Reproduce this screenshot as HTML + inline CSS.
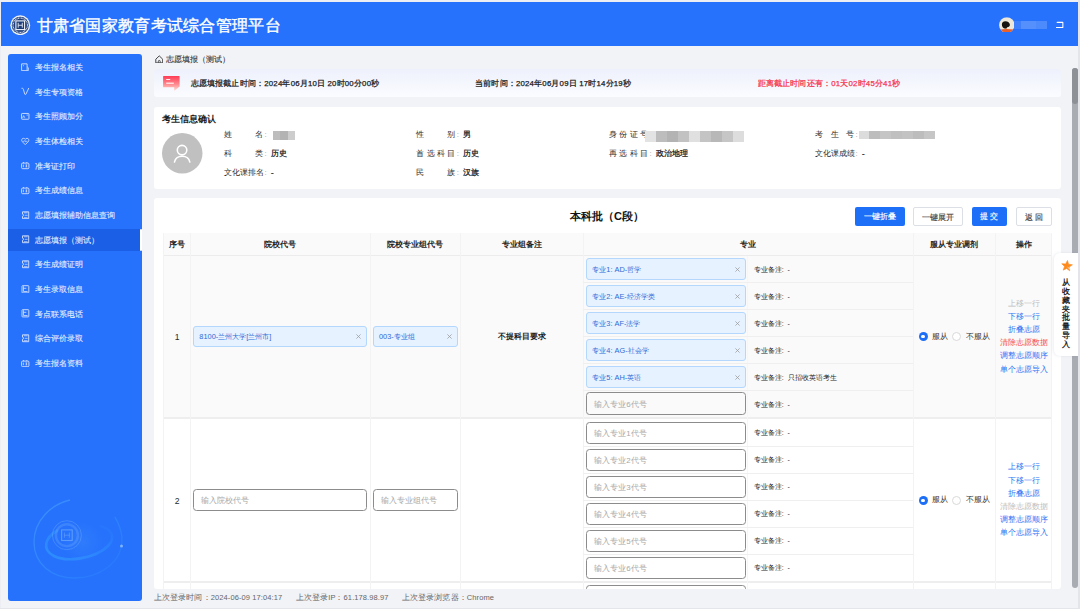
<!DOCTYPE html>
<html><head><meta charset="utf-8">
<style>
*{box-sizing:border-box;margin:0;padding:0}
html,body{width:1080px;height:609px;overflow:hidden}
body{position:relative;background:#e9eaee;font-family:"Liberation Sans",sans-serif;color:#333;font-size:8px;line-height:1}
.abs{position:absolute}
#page{position:absolute;left:0;top:0;width:1080px;height:609px;background:#f2f3f7;overflow:hidden}
#hdr{position:absolute;left:1px;top:2px;width:1077px;height:44px;background:#2672fc}
#title{position:absolute;left:35.5px;top:15px;color:#fff;font-size:16.3px;white-space:nowrap;letter-spacing:0.3px;-webkit-text-stroke:0.4px #fff}
#side{position:absolute;left:8px;top:54px;width:134.4px;height:546.8px;background:#2672fc;border-radius:3px;overflow:hidden}
.mi{position:absolute;left:0;width:134.7px;height:22px;color:#e6eeff;font-size:7.55px;-webkit-text-stroke:0.1px #e6eeff}
.mi .ic{position:absolute;left:13px;top:6.75px;width:8.5px;height:8.5px}
.mi .tx{position:absolute;left:27px;top:8px;white-space:nowrap}
.mi.act{background:#1b5fe6}
.mi.act:after{content:"";position:absolute;right:0.9px;top:0;width:2.1px;height:22px;background:#fff;border-radius:1px}
.card{position:absolute;background:#fff;border-radius:3px}
.t8{font-size:7.8px;white-space:nowrap;position:absolute}
.b{font-weight:bold}
.md{-webkit-text-stroke:0.25px #1a1a1a}
.cen{text-align:center}
.ft{font-size:7.5px;color:#666;letter-spacing:0.1px}
.rm{font-size:6.9px;color:#1f1f1f}
.btn{font-size:8px;text-align:center;line-height:20px;white-space:nowrap;-webkit-text-stroke:0.15px currentColor}
.tag{background:#e6f2ff;border:1px solid #b3d7fd;border-radius:3px;color:#2e6bd8;font-size:7.4px;white-space:nowrap}
.tag .x{position:absolute;color:#999;font-size:9px}
.inp{background:transparent;border:1px solid #8c8c8c;border-radius:3.5px;color:#a8a8a8;font-size:7.9px;white-space:nowrap}
</style></head><body>
<div id="page">
 <div id="hdr">
  <svg class="abs" style="left:9.1px;top:12.9px" width="20.5" height="20.5" viewBox="0 0 20.5 20.5">
   <circle cx="10.25" cy="10.25" r="9.9" fill="#eef2f8"/>
   <circle cx="10.25" cy="10.25" r="8.5" fill="#1d3c78"/>
   <circle cx="10.25" cy="10.25" r="7.2" fill="none" stroke="#dfe6f2" stroke-width="1.2" stroke-dasharray="0.9 0.6"/>
   <circle cx="10.25" cy="10.25" r="6" fill="#1d3c78"/>
   <rect x="5.9" y="5.9" width="8.7" height="8.7" fill="none" stroke="#f2f5fa" stroke-width="1.1"/>
   <path d="M8.2 7.8V12.7M12.3 7.8V12.7M8.2 10.25H12.3" stroke="#e8eef8" stroke-width="0.9" fill="none"/>
  </svg>
  <div id="title">甘肃省国家教育考试综合管理平台</div>
  <svg class="abs" style="left:997.6px;top:14.5px" width="15.6" height="15.9" viewBox="0 0 16 16">
   <defs><clipPath id="av"><circle cx="8" cy="8" r="7.95"/></clipPath></defs>
   <g clip-path="url(#av)"><rect width="16" height="16" fill="#eee8da"/>
   <rect x="6.6" y="10" width="1.2" height="2.6" fill="#d9a06a"/>
   <path d="M3 8.3C2.6 5.9 4.2 4.3 6.6 4.3C9 4.3 11.2 5.9 11.2 7.9C11.2 9.4 10 10.2 8.5 10.4L7.4 11.6L5.6 11.6C4.1 10.9 3.2 9.8 3 8.3Z" fill="#161412"/>
   <path d="M0 12.9Q8 11.2 16 12.9V16H0Z" fill="#e8612c"/></g>
  </svg>
  <div class="abs" style="left:1013.4px;top:18.8px;width:7px;height:8.3px;background:#3f7ffc"></div>
  <div class="abs" style="left:1020.4px;top:18.8px;width:15px;height:8.3px;background:#5590fd"></div>
  <div class="abs" style="left:1035.4px;top:18.8px;width:10.3px;height:8.3px;background:#4d8bfd"></div>
  <svg class="abs" style="left:1055px;top:19px" width="9" height="8" viewBox="0 0 9 8">
   <path d="M1.1 1.35H6.85V6.4H0.3" fill="none" stroke="#fff" stroke-width="1.05" stroke-linecap="round" stroke-linejoin="round"/>
  </svg>
 </div>

 <div id="side">
  <svg class="abs" style="left:0;top:0" width="134" height="546" viewBox="0 0 134 546">
   <defs>
    <linearGradient id="g1" x1="0" y1="0" x2="1" y2="1"><stop offset="0" stop-color="#5ab4ff" stop-opacity="0.45"/><stop offset="0.6" stop-color="#3aa2ff" stop-opacity="0.35"/><stop offset="1" stop-color="#3aa2ff" stop-opacity="0.05"/></linearGradient>
    <linearGradient id="g2" x1="0" y1="1" x2="1" y2="0"><stop offset="0" stop-color="#35a6ff" stop-opacity="0.55"/><stop offset="0.7" stop-color="#35a6ff" stop-opacity="0.25"/><stop offset="1" stop-color="#35a6ff" stop-opacity="0"/></linearGradient>
    <radialGradient id="g3" cx="0.5" cy="0.5" r="0.5"><stop offset="0" stop-color="#5aa6ff" stop-opacity="0.18"/><stop offset="1" stop-color="#5aa6ff" stop-opacity="0"/></radialGradient>
   </defs>
   <g fill="none">
    <path d="M62 446C44 450 26 466 26 488C26 510 44 524 66 524C92 524 114 508 114 486C114 478 111 470 107 463" stroke="url(#g1)" stroke-width="1.3"/>
    <path d="M50 476C36 484 34 496 46 502C60 509 88 504 100 492C108 484 104 474 92 472" stroke="url(#g2)" stroke-width="2.6"/>
    <circle cx="75" cy="488" r="20" fill="url(#g3)"/>
    <circle cx="58.9" cy="481.2" r="14.5" stroke="#8cc4ff" stroke-opacity="0.35" stroke-width="0.8"/>
    <circle cx="58.9" cy="481.2" r="11" stroke="#8cc4ff" stroke-opacity="0.22" stroke-width="2.4"/>
    <rect x="53.6" y="475.9" width="10.6" height="10.6" stroke="#9ccbff" stroke-opacity="0.45" stroke-width="1.1"/>
    <path d="M56.4 478.6V483.8M61.4 478.6V483.8M56.4 481.2H61.4" stroke="#9ccbff" stroke-opacity="0.4" stroke-width="0.8"/>
   </g>
   <circle cx="113.5" cy="492" r="1.5" fill="#a7d4ff" fill-opacity="0.65"/>
  </svg>
  <div class="mi" style="top:2.00px"><svg class="ic" viewBox="0 0 8.5 8.5"><path d="M0.6 0.85H6.1V7.65H0.6Z" fill="none" stroke="#dfe8ff" stroke-width="0.85"/><path d="M6.1 3.7L7.3 4.7V7.65H6.1" fill="none" stroke="#dfe8ff" stroke-width="0.8"/><path d="M1.9 2.1L3 3.2" stroke="#dfe8ff" stroke-width="0.7"/></svg><span class="tx">考生报名相关</span></div>
  <div class="mi" style="top:26.67px"><svg class="ic" viewBox="0 0 8.5 8.5"><path d="M0.5 1.3C1.5 0.9 2.1 1.5 2.4 2.3L3.7 7C3.9 7.7 4.7 7.7 5 7L7.8 1" fill="none" stroke="#dfe8ff" stroke-width="0.85"/></svg><span class="tx">考生专项资格</span></div>
  <div class="mi" style="top:51.34px"><svg class="ic" viewBox="0 0 8.5 8.5"><rect x="0.55" y="1.45" width="7.4" height="5.8" rx="0.6" fill="none" stroke="#dfe8ff" stroke-width="0.85"/><path d="M1.6 6.2L2.6 3.6L3.8 5.8" fill="none" stroke="#dfe8ff" stroke-width="0.7"/><circle cx="6.2" cy="3" r="0.6" fill="#dfe8ff"/></svg><span class="tx">考生照顾加分</span></div>
  <div class="mi" style="top:76.01px"><svg class="ic" viewBox="0 0 8.5 8.5"><path d="M4.25 7.6L1.2 4.7C0.2 3.5 0.7 1.3 2.4 1.3C3.2 1.3 3.7 1.7 4.25 2.3C4.8 1.7 5.3 1.3 6.1 1.3C7.8 1.3 8.3 3.5 7.3 4.7Z" fill="none" stroke="#dfe8ff" stroke-width="0.8"/><path d="M2 4.3H3.3L3.9 3.4L4.6 5.1L5.2 4.3H6.5" fill="none" stroke="#dfe8ff" stroke-width="0.6"/></svg><span class="tx">考生体检相关</span></div>
  <div class="mi" style="top:100.68px"><svg class="ic" viewBox="0 0 8.5 8.5"><rect x="0.6" y="2.1" width="7.3" height="5.6" rx="1" fill="none" stroke="#dfe8ff" stroke-width="0.85"/><path d="M2.5 2.1V1M5.8 2.1V1M2.4 3.6V6.2M4.6 3.9H6.3M4.6 5.9H6.3M5.4 3.9V5.9" fill="none" stroke="#dfe8ff" stroke-width="0.75"/></svg><span class="tx">准考证打印</span></div>
  <div class="mi" style="top:125.35px"><svg class="ic" viewBox="0 0 8.5 8.5"><rect x="0.6" y="2.1" width="7.3" height="5.6" rx="1" fill="none" stroke="#dfe8ff" stroke-width="0.85"/><path d="M2.5 2.1V1M5.8 2.1V1M2.4 3.6V6.2M4.6 3.9H6.3M4.6 5.9H6.3M5.4 3.9V5.9" fill="none" stroke="#dfe8ff" stroke-width="0.75"/></svg><span class="tx">考生成绩信息</span></div>
  <div class="mi" style="top:150.02px"><svg class="ic" viewBox="0 0 8.5 8.5"><path d="M1.5 0.8H7.7V7.7H1.5V5.3A1 1 0 0 0 1.5 3.2Z" fill="none" stroke="#dfe8ff" stroke-width="0.85"/><path d="M2.8 1.8H6.6M3.8 4.3H6.6M2.8 6.7H6.6" fill="none" stroke="#dfe8ff" stroke-width="0.7"/></svg><span class="tx">志愿填报辅助信息查询</span></div>
  <div class="mi act" style="top:174.69px"><svg class="ic" viewBox="0 0 8.5 8.5"><path d="M1.5 0.8H7.7V7.7H1.5V5.3A1 1 0 0 0 1.5 3.2Z" fill="none" stroke="#dfe8ff" stroke-width="0.85"/><path d="M2.8 1.8H6.6M3.8 4.3H6.6M2.8 6.7H6.6" fill="none" stroke="#dfe8ff" stroke-width="0.7"/></svg><span class="tx">志愿填报（测试）</span></div>
  <div class="mi" style="top:199.36px"><svg class="ic" viewBox="0 0 8.5 8.5"><path d="M1.5 0.8H7.7V7.7H1.5V5.3A1 1 0 0 0 1.5 3.2Z" fill="none" stroke="#dfe8ff" stroke-width="0.85"/><path d="M2.8 1.8H6.6M3.8 4.3H6.6M2.8 6.7H6.6" fill="none" stroke="#dfe8ff" stroke-width="0.7"/></svg><span class="tx">考生成绩证明</span></div>
  <div class="mi" style="top:224.03px"><svg class="ic" viewBox="0 0 8.5 8.5"><rect x="1" y="0.7" width="6.8" height="7.2" rx="0.6" fill="none" stroke="#dfe8ff" stroke-width="0.85"/><path d="M2.5 1.2V6.5H6.6M2.5 3.3H5.3" fill="none" stroke="#dfe8ff" stroke-width="0.75"/></svg><span class="tx">考生录取信息</span></div>
  <div class="mi" style="top:248.70px"><svg class="ic" viewBox="0 0 8.5 8.5"><rect x="1" y="0.7" width="6.8" height="7.2" rx="0.6" fill="none" stroke="#dfe8ff" stroke-width="0.85"/><path d="M2.5 1.2V6.5H6.6M2.5 3.3H5.3" fill="none" stroke="#dfe8ff" stroke-width="0.75"/></svg><span class="tx">考点联系电话</span></div>
  <div class="mi" style="top:273.37px"><svg class="ic" viewBox="0 0 8.5 8.5"><path d="M1.5 0.8H7.7V7.7H1.5V5.3A1 1 0 0 0 1.5 3.2Z" fill="none" stroke="#dfe8ff" stroke-width="0.85"/><path d="M2.8 1.8H6.6M3.8 4.3H6.6M2.8 6.7H6.6" fill="none" stroke="#dfe8ff" stroke-width="0.7"/></svg><span class="tx">综合评价录取</span></div>
  <div class="mi" style="top:298.04px"><svg class="ic" viewBox="0 0 8.5 8.5"><rect x="0.6" y="2.1" width="7.3" height="5.6" rx="1" fill="none" stroke="#dfe8ff" stroke-width="0.85"/><path d="M2.5 2.1V1M5.8 2.1V1M2.4 3.6V6.2M4.6 3.9H6.3M4.6 5.9H6.3M5.4 3.9V5.9" fill="none" stroke="#dfe8ff" stroke-width="0.75"/></svg><span class="tx">考生报名资料</span></div>
 </div>

 <!-- breadcrumb -->
 <svg class="abs" style="left:154.6px;top:54.6px" width="8.5" height="8.5" viewBox="0 0 8.5 8.5"><path d="M0.8 4.2L4.25 0.9L7.7 4.2V7.9H0.8Z" fill="none" stroke="#3a3a3a" stroke-width="0.95" stroke-linejoin="round"/><path d="M3.3 7.9V5.9C3.3 5.3 5.2 5.3 5.2 5.9V7.9" fill="none" stroke="#3a3a3a" stroke-width="0.8"/></svg>
 <div class="t8" style="left:165.6px;top:55.8px;color:#333;font-size:7.6px;-webkit-text-stroke:0.12px #333">志愿填报（测试）</div>

 <!-- notice -->
 <div class="card" style="left:154px;top:68.5px;width:907px;height:28.6px;background:linear-gradient(#eef1fc,#fbfcff)"></div>
 <svg class="abs" style="left:161.5px;top:75px" width="18" height="17" viewBox="0 0 18 17">
  <defs><linearGradient id="ng" x1="0" y1="0" x2="0" y2="1"><stop offset="0" stop-color="#ff3b55"/><stop offset="0.55" stop-color="#ff8a8f"/><stop offset="1" stop-color="#ffe0d8"/></linearGradient></defs>
  <path d="M1.6 0.9H17.1Q17.6 0.9 17.6 1.4V11.6L12.2 16V12.3H1.6Q1.1 12.3 1.1 11.8V1.4Q1.1 0.9 1.6 0.9Z" fill="url(#ng)"/>
  <rect x="4.2" y="4" width="4" height="1" fill="#fff" fill-opacity="0.9"/><rect x="4.2" y="7.6" width="7.6" height="1.2" fill="#fff" fill-opacity="0.9"/>
 </svg>
 <div class="t8 md" style="left:190.5px;top:79.5px;color:#1a1a1a;letter-spacing:0.2px">志愿填报截止时间：2024年06月10日 20时00分00秒</div>
 <div class="t8 md" style="left:475px;top:79.5px;color:#1a1a1a;letter-spacing:0.2px">当前时间：2024年06月09日 17时14分19秒</div>
 <div class="t8 md" style="left:757.5px;top:79.5px;color:#f5354f;letter-spacing:0.2px;-webkit-text-stroke-color:#f5354f">距离截止时间还有：01天02时45分41秒</div>

 <!-- info card -->
 <div class="card" style="left:154px;top:107px;width:907px;height:82px"></div>
 <div class="t8 b" style="left:161.5px;top:115px;font-size:9px;color:#1a1a1a">考生信息确认</div>
 <svg class="abs" style="left:162.3px;top:133.3px" width="40.5" height="40.5" viewBox="0 0 40 40">
  <circle cx="20" cy="20" r="20" fill="#c0c0c0"/>
  <circle cx="19.8" cy="16.9" r="4.7" fill="none" stroke="#fff" stroke-width="1.55"/>
  <path d="M12.3 28.7C13 25 16 22.9 19.9 22.9C23.8 22.9 26.8 25 27.5 28.7" fill="none" stroke="#fff" stroke-width="1.55" stroke-linecap="round"/>
 </svg>
 <div class="t8" style="left:224.00px;top:131.3px;color:#2b2b2b">姓</div><div class="t8" style="left:255.20px;top:131.3px;color:#2b2b2b">名</div><div class="t8" style="left:264.50px;top:130.8px;color:#999">:</div>
 <div class="t8" style="left:224.00px;top:150.3px;color:#2b2b2b">科</div><div class="t8" style="left:255.20px;top:150.3px;color:#2b2b2b">类</div><div class="t8" style="left:264.50px;top:149.8px;color:#999">:</div>
 <div class="t8 md" style="left:271px;top:150.3px;color:#1a1a1a">历史</div>
 <div class="t8" style="left:224px;top:169.3px;color:#2b2b2b">文化课排名</div><div class="t8" style="left:264.50px;top:168.8px;color:#999">:</div>
 <div class="t8 md" style="left:271px;top:169.3px;color:#1a1a1a">-</div>
 <div class="t8" style="left:416.20px;top:131.3px;color:#2b2b2b">性</div><div class="t8" style="left:447.40px;top:131.3px;color:#2b2b2b">别</div><div class="t8" style="left:456.70px;top:130.8px;color:#999">:</div>
 <div class="t8 md" style="left:463.2px;top:131.3px;color:#1a1a1a">男</div>
 <div class="t8" style="left:416.20px;top:150.3px;color:#2b2b2b">首</div><div class="t8" style="left:426.60px;top:150.3px;color:#2b2b2b">选</div><div class="t8" style="left:437.00px;top:150.3px;color:#2b2b2b">科</div><div class="t8" style="left:447.40px;top:150.3px;color:#2b2b2b">目</div><div class="t8" style="left:456.70px;top:149.8px;color:#999">:</div>
 <div class="t8 md" style="left:463.2px;top:150.3px;color:#1a1a1a">历史</div>
 <div class="t8" style="left:416.20px;top:169.3px;color:#2b2b2b">民</div><div class="t8" style="left:447.40px;top:169.3px;color:#2b2b2b">族</div><div class="t8" style="left:456.70px;top:168.8px;color:#999">:</div>
 <div class="t8 md" style="left:463.2px;top:169.3px;color:#1a1a1a">汉族</div>
 <div class="t8" style="left:609.00px;top:131.3px;color:#2b2b2b">身</div><div class="t8" style="left:619.40px;top:131.3px;color:#2b2b2b">份</div><div class="t8" style="left:629.80px;top:131.3px;color:#2b2b2b">证</div><div class="t8" style="left:640.20px;top:131.3px;color:#2b2b2b">号</div><div class="t8" style="left:649.50px;top:130.8px;color:#999">:</div>
 <div class="t8" style="left:609.00px;top:150.3px;color:#2b2b2b">再</div><div class="t8" style="left:619.40px;top:150.3px;color:#2b2b2b">选</div><div class="t8" style="left:629.80px;top:150.3px;color:#2b2b2b">科</div><div class="t8" style="left:640.20px;top:150.3px;color:#2b2b2b">目</div><div class="t8" style="left:649.50px;top:149.8px;color:#999">:</div>
 <div class="t8 md" style="left:656px;top:150.3px;color:#1a1a1a">政治地理</div>
 <div class="t8" style="left:815.00px;top:131.3px;color:#2b2b2b">考</div><div class="t8" style="left:830.60px;top:131.3px;color:#2b2b2b">生</div><div class="t8" style="left:846.20px;top:131.3px;color:#2b2b2b">号</div><div class="t8" style="left:855.50px;top:130.8px;color:#999">:</div>
 <div class="t8" style="left:815px;top:150.3px;color:#2b2b2b">文化课成绩</div><div class="t8" style="left:855.50px;top:149.8px;color:#999">:</div>
 <div class="t8 md" style="left:862px;top:150.3px;color:#1a1a1a">-</div>
 <div class="abs" style="left:272.50px;top:131px;width:7.80px;height:8.5px;background:#bdbdbd"></div><div class="abs" style="left:280.00px;top:131px;width:7.80px;height:8.5px;background:#b3b3b3"></div><div class="abs" style="left:287.50px;top:131px;width:7.80px;height:8.5px;background:#cdcdcd"></div>
 <div class="abs" style="left:645.00px;top:130.6px;width:11.30px;height:11px;background:#e3e3e3"></div><div class="abs" style="left:656.00px;top:130.6px;width:11.30px;height:11px;background:#bdbdbd"></div><div class="abs" style="left:667.00px;top:130.6px;width:11.30px;height:11px;background:#b3b3b3"></div><div class="abs" style="left:678.00px;top:130.6px;width:11.30px;height:11px;background:#c2c2c2"></div><div class="abs" style="left:689.00px;top:130.6px;width:11.30px;height:11px;background:#e0e0e0"></div><div class="abs" style="left:700.00px;top:130.6px;width:11.30px;height:11px;background:#c4c4c4"></div><div class="abs" style="left:711.00px;top:130.6px;width:11.30px;height:11px;background:#b8b8b8"></div><div class="abs" style="left:722.00px;top:130.6px;width:11.30px;height:11px;background:#c6c6c6"></div><div class="abs" style="left:733.00px;top:130.6px;width:11.30px;height:11px;background:#dddddd"></div>
 <div class="abs" style="left:858.50px;top:130.6px;width:11.23px;height:8.5px;background:#dcdcdc"></div><div class="abs" style="left:869.43px;top:130.6px;width:11.23px;height:8.5px;background:#bdbdbd"></div><div class="abs" style="left:880.36px;top:130.6px;width:11.23px;height:8.5px;background:#c5c5c5"></div><div class="abs" style="left:891.29px;top:130.6px;width:11.23px;height:8.5px;background:#c0c0c0"></div><div class="abs" style="left:902.21px;top:130.6px;width:11.23px;height:8.5px;background:#c3c3c3"></div><div class="abs" style="left:913.14px;top:130.6px;width:11.23px;height:8.5px;background:#bdbdbd"></div><div class="abs" style="left:924.07px;top:130.6px;width:11.23px;height:8.5px;background:#c6c6c6"></div>

 <!-- table card -->
 <div class="card" style="left:154px;top:198px;width:907px;height:391px"></div>
 <div class="t8 b" style="left:570px;top:210.8px;font-size:11px;color:#111">本科批（C段）</div>
 <div class="abs btn" style="left:855px;top:207px;width:49.5px;height:18.5px;background:#1d6ff7;color:#fff;border-radius:2px">一键折叠</div>
 <div class="abs btn" style="left:913px;top:207px;width:49.5px;height:18.5px;background:#fff;color:#444;border:1px solid #dcdfe6;border-radius:2px">一键展开</div>
 <div class="abs btn" style="left:971.5px;top:207px;width:35.5px;height:18.5px;background:#1d6ff7;color:#fff;border-radius:2px">提 交</div>
 <div class="abs btn" style="left:1016px;top:207px;width:36px;height:18.5px;background:#fff;color:#444;border:1px solid #dcdfe6;border-radius:2px">返 回</div>
 <div class="abs" style="left:0;top:0;width:1080px;height:589px;overflow:hidden">
 <div class="abs" style="left:162.5px;top:233px;width:889.0px;height:356px;background:#fafafa;border-radius:3px 3px 0 0"></div>
 <div class="abs" style="left:162.5px;top:419px;width:889.0px;height:170px;background:#fff"></div>
 <div class="abs" style="left:162.5px;top:255.0px;width:889.0px;height:1px;background:#ececec"></div>
 <div class="abs" style="left:162.5px;top:416.8px;width:889.0px;height:2.3px;background:#eeeeee"></div>
 <div class="abs" style="left:162.5px;top:581px;width:889.0px;height:2px;background:#eeeeee"></div>
 <div class="abs" style="left:162.5px;top:233px;width:1px;height:356px;background:#f3f3f3"></div>
 <div class="abs" style="left:190.0px;top:233px;width:1px;height:356px;background:#f3f3f3"></div>
 <div class="abs" style="left:369.5px;top:233px;width:1px;height:356px;background:#f3f3f3"></div>
 <div class="abs" style="left:459.5px;top:233px;width:1px;height:356px;background:#f3f3f3"></div>
 <div class="abs" style="left:582.5px;top:233px;width:1px;height:356px;background:#f3f3f3"></div>
 <div class="abs" style="left:912.5px;top:233px;width:1px;height:356px;background:#f3f3f3"></div>
 <div class="abs" style="left:995.0px;top:233px;width:1px;height:356px;background:#f3f3f3"></div>
 <div class="abs" style="left:1050.5px;top:233px;width:1px;height:356px;background:#f3f3f3"></div>
 <div class="abs" style="left:746.5px;top:255.5px;width:1px;height:333.5px;background:#f6f6f6"></div>
 <div class="t8 b cen" style="left:136.5px;top:240.5px;width:80px;color:#222">序号</div>
 <div class="t8 b cen" style="left:240.25px;top:240.5px;width:80px;color:#222">院校代号</div>
 <div class="t8 b cen" style="left:375.0px;top:240.5px;width:80px;color:#222">院校专业组代号</div>
 <div class="t8 b cen" style="left:481.5px;top:240.5px;width:80px;color:#222">专业组备注</div>
 <div class="t8 b cen" style="left:708.0px;top:240.5px;width:80px;color:#222">专业</div>
 <div class="t8 b cen" style="left:914.25px;top:240.5px;width:80px;color:#222">服从专业调剂</div>
 <div class="t8 b cen" style="left:983.5px;top:240.5px;width:80px;color:#222">操作</div>
 <div class="abs" style="left:583px;top:282.0px;width:330px;height:1px;background:#efefef"></div>
 <div class="abs" style="left:583px;top:309.0px;width:330px;height:1px;background:#efefef"></div>
 <div class="abs" style="left:583px;top:336.0px;width:330px;height:1px;background:#efefef"></div>
 <div class="abs" style="left:583px;top:363.0px;width:330px;height:1px;background:#efefef"></div>
 <div class="abs" style="left:583px;top:390.0px;width:330px;height:1px;background:#efefef"></div>
 <div class="abs" style="left:583px;top:446.4px;width:330px;height:1px;background:#efefef"></div>
 <div class="abs" style="left:583px;top:473.4px;width:330px;height:1px;background:#efefef"></div>
 <div class="abs" style="left:583px;top:500.4px;width:330px;height:1px;background:#efefef"></div>
 <div class="abs" style="left:583px;top:527.4px;width:330px;height:1px;background:#efefef"></div>
 <div class="abs" style="left:583px;top:554.4px;width:330px;height:1px;background:#efefef"></div>
 <div class="t8 cen" style="left:163.1px;top:332.6px;width:28px;color:#2a2a2a;font-size:8.6px">1</div>
 <div class="abs tag" style="left:193.3px;top:325.8px;width:174.2px;height:21px"><span style="position:absolute;left:5px;top:6.50px">8100-兰州大学[兰州市]</span><svg class="abs" style="right:5px;top:7.00px" width="5" height="5" viewBox="0 0 5 5"><path d="M0.4 0.4L4.6 4.6M4.6 0.4L0.4 4.6" stroke="#9a9a9a" stroke-width="0.75"/></svg></div>
 <div class="abs tag" style="left:373px;top:325.8px;width:85px;height:21px"><span style="position:absolute;left:5px;top:6.50px">003-专业组</span><svg class="abs" style="right:5px;top:7.00px" width="5" height="5" viewBox="0 0 5 5"><path d="M0.4 0.4L4.6 4.6M4.6 0.4L0.4 4.6" stroke="#9a9a9a" stroke-width="0.75"/></svg></div>
 <div class="t8 b cen" style="left:460px;top:332.5px;width:123px;color:#1a1a1a">不提科目要求</div>
 <div class="abs tag" style="left:586.3px;top:258px;width:159.5px;height:22px"><span style="position:absolute;left:5px;top:7.00px">专业1: AD-哲学</span><svg class="abs" style="right:5px;top:7.50px" width="5" height="5" viewBox="0 0 5 5"><path d="M0.4 0.4L4.6 4.6M4.6 0.4L0.4 4.6" stroke="#9a9a9a" stroke-width="0.75"/></svg></div>
 <div class="t8 rm" style="left:753.8px;top:266.5px">专业备注:&nbsp; -</div>
 <div class="abs tag" style="left:586.3px;top:285px;width:159.5px;height:22px"><span style="position:absolute;left:5px;top:7.00px">专业2: AE-经济学类</span><svg class="abs" style="right:5px;top:7.50px" width="5" height="5" viewBox="0 0 5 5"><path d="M0.4 0.4L4.6 4.6M4.6 0.4L0.4 4.6" stroke="#9a9a9a" stroke-width="0.75"/></svg></div>
 <div class="t8 rm" style="left:753.8px;top:293.5px">专业备注:&nbsp; -</div>
 <div class="abs tag" style="left:586.3px;top:312px;width:159.5px;height:22px"><span style="position:absolute;left:5px;top:7.00px">专业3: AF-法学</span><svg class="abs" style="right:5px;top:7.50px" width="5" height="5" viewBox="0 0 5 5"><path d="M0.4 0.4L4.6 4.6M4.6 0.4L0.4 4.6" stroke="#9a9a9a" stroke-width="0.75"/></svg></div>
 <div class="t8 rm" style="left:753.8px;top:320.5px">专业备注:&nbsp; -</div>
 <div class="abs tag" style="left:586.3px;top:339px;width:159.5px;height:22px"><span style="position:absolute;left:5px;top:7.00px">专业4: AG-社会学</span><svg class="abs" style="right:5px;top:7.50px" width="5" height="5" viewBox="0 0 5 5"><path d="M0.4 0.4L4.6 4.6M4.6 0.4L0.4 4.6" stroke="#9a9a9a" stroke-width="0.75"/></svg></div>
 <div class="t8 rm" style="left:753.8px;top:347.5px">专业备注:&nbsp; -</div>
 <div class="abs tag" style="left:586.3px;top:366px;width:159.5px;height:22px"><span style="position:absolute;left:5px;top:7.00px">专业5: AH-英语</span><svg class="abs" style="right:5px;top:7.50px" width="5" height="5" viewBox="0 0 5 5"><path d="M0.4 0.4L4.6 4.6M4.6 0.4L0.4 4.6" stroke="#9a9a9a" stroke-width="0.75"/></svg></div>
 <div class="t8 rm" style="left:753.8px;top:374.5px">专业备注:&nbsp; 只招收英语考生</div>
 <div class="abs inp" style="left:586.3px;top:392.4px;width:159.5px;height:22.6px"><span style="position:absolute;left:7px;top:7.30px">输入专业6代号</span></div>
 <div class="t8 rm" style="left:753.8px;top:401.5px">专业备注:&nbsp; -</div>
 <div class="abs" style="left:918.5px;top:332.0px;width:9px;height:9px;border-radius:50%;background:#1d6ff7"></div><div class="abs" style="left:921.2px;top:334.7px;width:3.6px;height:3.6px;border-radius:50%;background:#fff"></div><div class="t8" style="left:932px;top:332.5px;color:#333">服从</div><div class="abs" style="left:952.3px;top:332.0px;width:9px;height:9px;border-radius:50%;background:#fff;border:1px solid #d9d9d9"></div><div class="t8" style="left:965.5px;top:332.5px;color:#333">不服从</div>
 <div class="t8 cen" style="left:995.5px;top:299.60px;width:56px;color:#bdbdbd">上移一行</div><div class="t8 cen" style="left:995.5px;top:312.80px;width:56px;color:#2f74f6">下移一行</div><div class="t8 cen" style="left:995.5px;top:326.00px;width:56px;color:#2f74f6">折叠志愿</div><div class="t8 cen" style="left:995.5px;top:339.20px;width:56px;color:#f5484f">清除志愿数据</div><div class="t8 cen" style="left:995.5px;top:352.40px;width:56px;color:#2f74f6">调整志愿顺序</div><div class="t8 cen" style="left:995.5px;top:365.60px;width:56px;color:#2f74f6">单个志愿导入</div>
 <div class="t8 cen" style="left:163.1px;top:496.6px;width:28px;color:#2a2a2a;font-size:8.6px">2</div>
 <div class="abs inp" style="left:193.3px;top:488.6px;width:174.2px;height:22.6px"><span style="position:absolute;left:7px;top:7.30px">输入院校代号</span></div>
 <div class="abs inp" style="left:373px;top:488.6px;width:85px;height:22.6px"><span style="position:absolute;left:7px;top:7.30px">输入专业组代号</span></div>
 <div class="abs inp" style="left:586.3px;top:421.6px;width:159.5px;height:22.8px"><span style="position:absolute;left:7px;top:7.40px">输入专业1代号</span></div>
 <div class="t8 rm" style="left:753.8px;top:430.0px">专业备注:&nbsp; -</div>
 <div class="abs inp" style="left:586.3px;top:448.6px;width:159.5px;height:22.8px"><span style="position:absolute;left:7px;top:7.40px">输入专业2代号</span></div>
 <div class="t8 rm" style="left:753.8px;top:457.0px">专业备注:&nbsp; -</div>
 <div class="abs inp" style="left:586.3px;top:475.6px;width:159.5px;height:22.8px"><span style="position:absolute;left:7px;top:7.40px">输入专业3代号</span></div>
 <div class="t8 rm" style="left:753.8px;top:484.0px">专业备注:&nbsp; -</div>
 <div class="abs inp" style="left:586.3px;top:502.6px;width:159.5px;height:22.8px"><span style="position:absolute;left:7px;top:7.40px">输入专业4代号</span></div>
 <div class="t8 rm" style="left:753.8px;top:511.0px">专业备注:&nbsp; -</div>
 <div class="abs inp" style="left:586.3px;top:529.6px;width:159.5px;height:22.8px"><span style="position:absolute;left:7px;top:7.40px">输入专业5代号</span></div>
 <div class="t8 rm" style="left:753.8px;top:538.0px">专业备注:&nbsp; -</div>
 <div class="abs inp" style="left:586.3px;top:556.6px;width:159.5px;height:22.8px"><span style="position:absolute;left:7px;top:7.40px">输入专业6代号</span></div>
 <div class="t8 rm" style="left:753.8px;top:565.0px">专业备注:&nbsp; -</div>
 <div class="abs" style="left:918.5px;top:495.8px;width:9px;height:9px;border-radius:50%;background:#1d6ff7"></div><div class="abs" style="left:921.2px;top:498.5px;width:3.6px;height:3.6px;border-radius:50%;background:#fff"></div><div class="t8" style="left:932px;top:496.3px;color:#333">服从</div><div class="abs" style="left:952.3px;top:495.8px;width:9px;height:9px;border-radius:50%;background:#fff;border:1px solid #d9d9d9"></div><div class="t8" style="left:965.5px;top:496.3px;color:#333">不服从</div>
 <div class="t8 cen" style="left:995.5px;top:463.35px;width:56px;color:#2f74f6">上移一行</div><div class="t8 cen" style="left:995.5px;top:476.55px;width:56px;color:#2f74f6">下移一行</div><div class="t8 cen" style="left:995.5px;top:489.75px;width:56px;color:#2f74f6">折叠志愿</div><div class="t8 cen" style="left:995.5px;top:502.95px;width:56px;color:#bdbdbd">清除志愿数据</div><div class="t8 cen" style="left:995.5px;top:516.15px;width:56px;color:#2f74f6">调整志愿顺序</div><div class="t8 cen" style="left:995.5px;top:529.35px;width:56px;color:#2f74f6">单个志愿导入</div>
 <div class="abs inp" style="left:586.3px;top:584.8px;width:159.5px;height:22.8px"><span style="position:absolute;left:7px;top:7.40px"></span></div>
 </div>

 <!-- footer -->
 <div class="t8 ft" style="left:154px;top:593.5px">上次登录时间：2024-06-09 17:04:17</div>
 <div class="t8 ft" style="left:295.8px;top:593.5px">上次登录IP：61.178.98.97</div>
 <div class="t8 ft" style="left:402px;top:593.5px">上次登录浏览器：Chrome</div>

 <!-- scrollbar -->
 <div class="abs" style="left:1072px;top:68px;width:6px;height:520px;background:#a9acb3;border-radius:3px"></div>
 <div class="abs" style="left:1072px;top:68px;width:6px;height:36px;background:#8d9096;border-radius:3px"></div>

 <!-- floating tab -->
 <div class="abs" style="left:1054px;top:253.2px;width:24px;height:102.5px;background:#fff;border-radius:6px 0 0 6px;box-shadow:-1px 0 3px rgba(60,80,140,0.10)"></div>
 <svg class="abs" style="left:1060.5px;top:259.8px" width="12" height="12" viewBox="0 0 12 12"><path d="M6.49 0.43L7.54 4.18L11.38 4.84L8.14 7.00L8.70 10.85L5.64 8.44L2.15 10.16L3.50 6.51L0.78 3.72L4.67 3.88Z" fill="#ff8a1c" stroke="#ff8a1c" stroke-width="0.6" stroke-linejoin="round"/><path d="M6.6 7.2L9.6 9.6" stroke="#fff" stroke-width="0.7"/></svg>
 <div class="abs b" style="left:1057px;top:279px;width:18px;font-size:8px;line-height:8.85px;color:#222;text-align:center;white-space:normal;word-break:break-all">从<br>收<br>藏<br>夹<br>批<br>量<br>导<br>入</div>
 <!-- borders -->
 <div class="abs" style="left:0;top:0;width:1080px;height:2px;background:#eceef3"></div>
 <div class="abs" style="left:0;top:0;width:1px;height:609px;background:#eceef3"></div>
 <div class="abs" style="left:1078px;top:0;width:2px;height:609px;background:#e4e5ea"></div>
 <div class="abs" style="left:0;top:608px;width:1080px;height:1px;background:#e4e5ea"></div>
</div>
</body></html>
